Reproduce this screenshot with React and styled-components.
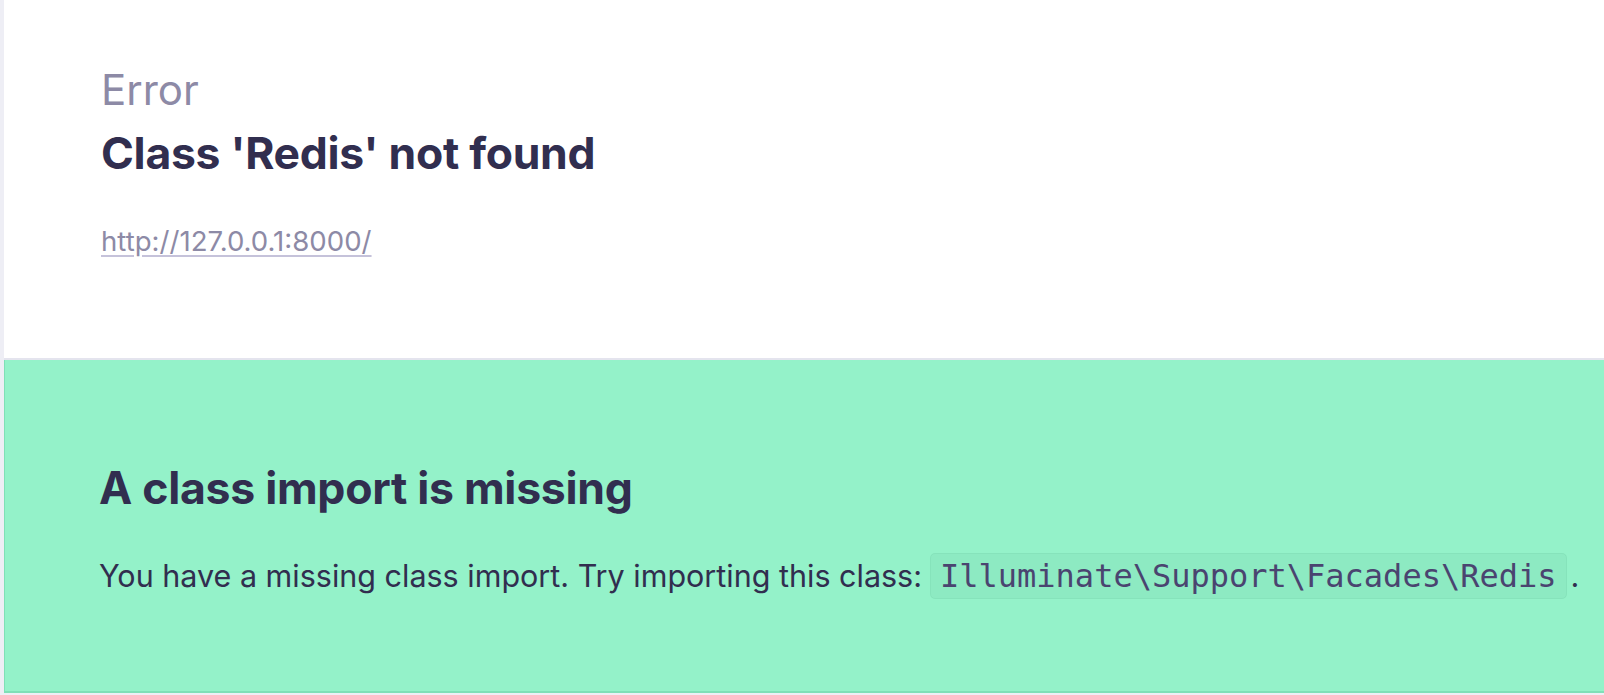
import React from "react";
import styled, { createGlobalStyle } from "styled-components";

const GlobalStyle = createGlobalStyle`
  html, body {
    margin: 0;
    padding: 0;
    background: #eeeef5;
    font-family: Inter, "Noto Sans", sans-serif;
  }
`;

const Page = styled.div`
  padding-left: 4px;
  height: 695px;
  box-sizing: border-box;
`;

const Card = styled.div`
  background: #ffffff;
  display: flex;
  flex-direction: column;
`;

const Header = styled.header`
  height: 360px;
  box-sizing: border-box;
  padding: 65px 0 0 97px;
  border-bottom: 2px solid #e4e4ee;
`;

const ExceptionClass = styled.div`
  font-size: 42px;
  font-weight: 400;
  color: #8d8aa6;
  line-height: 50px;
`;

const Message = styled.h1`
  margin: 10px 0 0;
  font-size: 44.5px;
  font-weight: 700;
  color: #312e4f;
  line-height: 56px;
  letter-spacing: -0.3px;
`;

const Url = styled.a`
  display: inline-block;
  margin-top: 43px;
  font-size: 27.6px;
  line-height: 34px;
  color: #8d8aa6;
  text-decoration: underline;
  text-decoration-color: #c5c2da;
  text-underline-offset: 4px;
`;

const Solution = styled.section`
  background: #94f2c9;
  height: 333px;
  box-sizing: border-box;
  padding: 101px 0 0 94px;
  border-bottom: 2px solid #7fe0b7;
  border-left: 1px solid #7fe0b7;
`;

const SolutionTitle = styled.h2`
  margin: 0;
  font-size: 44.6px;
  font-weight: 700;
  color: #312e4f;
  line-height: 54px;
  letter-spacing: -0.3px;
`;

const SolutionText = styled.p`
  margin: 39px 0 0;
  font-size: 30.5px;
  color: #312e4f;
  line-height: 44px;
`;

const Code = styled.code`
  font-family: "DejaVu Sans Mono", "Liberation Mono", monospace;
  font-size: 32px;
  color: #4a4470;
  background: rgba(40, 120, 90, 0.06);
  border: 1px solid rgba(40, 120, 90, 0.06);
  border-radius: 5px;
  padding: 3px 9px;
  margin: 0 4px 0 8px;
`;

export default function App() {
  return (
    <>
      <GlobalStyle />
      <Page>
        <Card>
          <Header>
            <ExceptionClass>Error</ExceptionClass>
            <Message>Class 'Redis' not found</Message>
            <Url href="#">http://127.0.0.1:8000/</Url>
          </Header>
          <Solution>
            <SolutionTitle>A class import is missing</SolutionTitle>
            <SolutionText>
              You have a missing class import. Try importing this class:
              <Code>Illuminate\Support\Facades\Redis</Code>.
            </SolutionText>
          </Solution>
        </Card>
      </Page>
    </>
  );
}
